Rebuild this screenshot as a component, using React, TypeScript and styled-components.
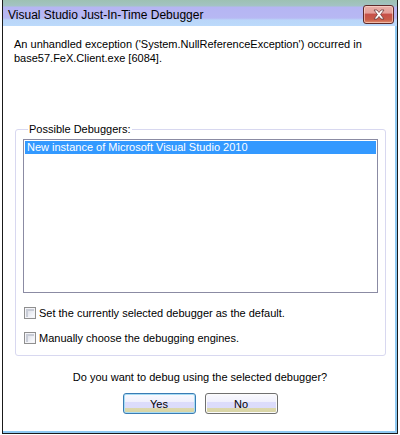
import React from 'react';
import styled, { createGlobalStyle } from 'styled-components';

const GlobalStyle = createGlobalStyle`
  html, body {
    margin: 0;
    padding: 0;
    background: #ffffff;
  }
  body {
    font-family: "Liberation Sans", Arial, sans-serif;
    font-size: 11px;
    color: #000;
  }
`;

const Window = styled.div`
  box-sizing: border-box;
  width: 396px;
  height: 434px;
  margin-left: 2px;
  border-left: 1px solid #1a1a1a;
  border-right: 1px solid #1a1a1a;
  border-bottom: 1px solid #1a1a1a;
  display: flex;
  flex-direction: column;
`;

const TitleBar = styled.div`
  height: 26px;
  flex: none;
  display: flex;
  align-items: center;
  justify-content: space-between;
  padding: 0 3px 0 5px;
  background: linear-gradient(
    to bottom,
    #9dc1b3 0px,
    #a3c3c4 6px,
    #b5b5f3 7px,
    #b7b8f3 18px,
    #bad6f9 20px,
    #bcdafb 26px
  );
`;

const Title = styled.span`
  font-size: 12px;
  color: #000;
  margin-top: 3px;
`;

const CloseButton = styled.div`
  box-sizing: border-box;
  width: 31px;
  height: 19px;
  margin-top: 3px;
  border: 1px solid #5d2a2a;
  border-radius: 3px;
  display: flex;
  align-items: center;
  justify-content: center;
  background: linear-gradient(
    to bottom,
    #e9b0a8 0%,
    #e4a09a 40%,
    #c65048 50%,
    #c95c48 80%,
    #e09070 100%
  );
  box-shadow: inset 0 0 0 1px rgba(255, 220, 210, 0.6);
`;

const Client = styled.div`
  flex: 1;
  display: flex;
  flex-direction: column;
  background: #fff;
  border-right: 2px solid #8ec9f2;
  border-bottom: 2px solid #8ec9f2;
  padding: 11px 9px 0 11px;
`;

const Message = styled.p`
  margin: 0;
  line-height: 14px;
`;

const Group = styled.fieldset`
  margin: 58px 0 0 1px;
  padding: 3px 7px 0 7px;
  height: 233px;
  box-sizing: border-box;
  border: 1px solid #d8d8f0;
  border-radius: 3px;
  display: flex;
  flex-direction: column;
`;

const Legend = styled.legend`
  padding: 0 1px;
  margin-left: 5px;
  line-height: 13px;
`;

const ListBox = styled.div`
  height: 154px;
  box-sizing: border-box;
  border: 1px solid #8b8ba3;
  padding: 1px;
`;

const ListItem = styled.div<{ $selected?: boolean }>`
  height: 13px;
  line-height: 13px;
  padding-left: 2px;
  background: ${(p) => (p.$selected ? '#3399ff' : 'transparent')};
  color: ${(p) => (p.$selected ? '#fff' : '#000')};
`;

const CheckRow = styled.label<{ $top: number }>`
  display: flex;
  align-items: center;
  gap: 3px;
  height: 13px;
  margin-left: 1px;
  margin-top: ${(p) => p.$top}px;
`;

const Box = styled.span`
  box-sizing: border-box;
  width: 12px;
  height: 12px;
  border: 1px solid #8f8f8f;
  background: linear-gradient(135deg, #d6d6dc 0%, #eef0f6 60%, #ffffff 100%);
  box-shadow: inset 0 0 0 1px #f4f4f8, inset 2px 2px 0 1px #c8ccd6;
`;

const Question = styled.div`
  text-align: center;
  margin-top: 14px;
  line-height: 14px;
`;

const Buttons = styled.div`
  display: flex;
  justify-content: center;
  gap: 9px;
  margin-top: 9px;
`;

const Button = styled.button<{ $default?: boolean }>`
  box-sizing: border-box;
  width: 73px;
  height: 21px;
  padding: 0;
  font-family: "Liberation Sans", Arial, sans-serif;
  font-size: 11px;
  color: #000;
  border-radius: 3px;
  border: 1px solid ${(p) => (p.$default ? '#3a7cb4' : '#707070')};
  box-shadow: inset 0 0 0 1px ${(p) => (p.$default ? '#a8dcf4' : '#fbfbfb')};
  background: linear-gradient(
    to bottom,
    #fafafe 0%,
    #f0f0fc 40%,
    #dcdcfc 42%,
    #dcdcfa 72%,
    #dcd8ac 74%,
    #d8d4a4 100%
  );
`;

export default function App() {
  return (
    <>
      <GlobalStyle />
      <Window>
        <TitleBar>
          <Title>Visual Studio Just-In-Time Debugger</Title>
          <CloseButton>
            <svg width="14" height="11" viewBox="0 0 14 11">
              <path
                d="M2 1 L5 1 L7 3.5 L9 1 L12 1 L8.6 5.5 L12 10 L9 10 L7 7.5 L5 10 L2 10 L5.4 5.5 Z"
                fill="#ffffff"
                stroke="#6b3a3a"
                strokeWidth="0.8"
              />
            </svg>
          </CloseButton>
        </TitleBar>
        <Client>
          <Message>
            An unhandled exception ('System.NullReferenceException') occurred in
            <br />
            base57.FeX.Client.exe [6084].
          </Message>
          <Group>
            <Legend>Possible Debuggers:</Legend>
            <ListBox>
              <ListItem $selected>New instance of Microsoft Visual Studio 2010</ListItem>
            </ListBox>
            <CheckRow $top={13}>
              <Box />
              Set the currently selected debugger as the default.
            </CheckRow>
            <CheckRow $top={12}>
              <Box />
              Manually choose the debugging engines.
            </CheckRow>
          </Group>
          <Question>Do you want to debug using the selected debugger?</Question>
          <Buttons>
            <Button $default>Yes</Button>
            <Button>No</Button>
          </Buttons>
        </Client>
      </Window>
    </>
  );
}
